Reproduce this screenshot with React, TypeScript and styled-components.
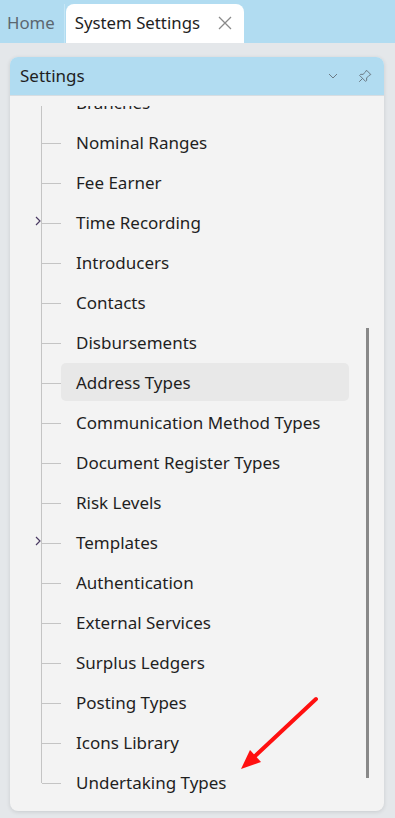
import React, { useLayoutEffect, useRef } from "react";
import styled, { createGlobalStyle } from "styled-components";

const Global = createGlobalStyle`
  html, body { margin: 0; padding: 0; }
  body {
    width: 395px; height: 818px; overflow: hidden;
    background: #e4e7ea;
    font-family: "Noto Sans", "Open Sans", sans-serif;
    color: #1c1c1c;
  }
`;

const Page = styled.div`
  position: relative;
  width: 395px;
  height: 818px;
  display: flex;
  flex-direction: column;
`;

const TabBar = styled.div`
  flex: none;
  height: 43px;
  background: #b1dcf1;
  display: flex;
  align-items: flex-end;
  padding-left: 7px;
  box-sizing: border-box;
`;

const HomeTab = styled.div`
  height: 39px;
  display: flex;
  align-items: center;
  padding-right: 9px;
  font-size: 16.8px;
  color: #5b6770;
  border-right: 1px solid #c6e6f5;
  margin-right: 1px;
  box-sizing: border-box;
  padding-bottom: 2px;
`;

const ActiveTab = styled.div`
  height: 39px;
  width: 178px;
  background: #ffffff;
  border-radius: 8px 8px 0 0;
  display: flex;
  align-items: center;
  padding: 0 0 2px 9px;
  box-sizing: border-box;
  font-size: 16.8px;
  color: #1f1f1f;
  gap: 17px;
`;

const CloseBtn = styled.span`
  display: inline-flex;
  width: 16px;
  height: 16px;
  align-items: center;
  justify-content: center;
`;

const Content = styled.div`
  flex: 1;
  min-height: 0;
  padding: 14px 11px 7px 10px;
  display: flex;
`;

const Panel = styled.div`
  flex: 1;
  min-height: 0;
  position: relative;
  background: #f3f3f3;
  border-radius: 8px;
  box-shadow: 0 1px 4px rgba(0, 0, 0, 0.12);
  display: flex;
  flex-direction: column;
  overflow: hidden;
`;

const PanelHeader = styled.div`
  flex: none;
  height: 39px;
  background: #b1dcf1;
  border-bottom: 1px solid #d6dde2;
  display: flex;
  align-items: center;
  padding: 0 12px 0 10px;
  box-sizing: border-box;
  font-size: 17px;
  color: #1f1f1f;
`;

const HeaderTitle = styled.div`
  flex: 1;
  padding-bottom: 1px;
`;

const HeaderIcons = styled.div`
  display: flex;
  align-items: center;
  gap: 20px;
`;

const Body = styled.div`
  flex: 1;
  position: relative;
  padding: 10px 0 8px 0;
  display: flex;
  min-height: 0;
`;

const Scroller = styled.div`
  flex: 1;
  overflow-y: auto;
  scrollbar-width: none;
  &::-webkit-scrollbar { display: none; }
`;

const List = styled.ul`
  list-style: none;
  margin: 0;
  padding: 0 35px 0 31px;
`;

const Row = styled.li<{ $last?: boolean }>`
  position: relative;
  height: 40px;
  display: flex;
  align-items: center;
  &::before {
    content: "";
    position: absolute;
    left: 0;
    top: 0;
    width: 1px;
    height: ${(p) => (p.$last ? "20px" : "40px")};
    background: #c4c4c4;
  }
`;

const Connector = styled.span`
  width: 19px;
  height: 1px;
  background: #c4c4c4;
  margin-left: 1px;
  flex: none;
`;

const Expander = styled.span`
  position: absolute;
  left: -6px;
  top: 13px;
  display: flex;
`;

const Label = styled.span<{ $selected?: boolean }>`
  flex: 1;
  height: 38px;
  display: flex;
  align-items: center;
  padding-left: 15px;
  margin-top: -2px;
  border-radius: 5px;
  font-size: 17px;
  color: #1f1f1f;
  background: ${(p) => (p.$selected ? "#e8e8e8" : "transparent")};
  white-space: nowrap;
`;

const ScrollThumb = styled.div`
  position: absolute;
  right: 15px;
  top: 232px;
  width: 3px;
  height: 450px;
  background: #888888;
`;

const Arrow = styled.svg`
  position: absolute;
  left: 236px;
  top: 693px;
  pointer-events: none;
`;

const items: { name: string; expand?: boolean; selected?: boolean }[] = [
  { name: "Branches" },
  { name: "Nominal Ranges" },
  { name: "Fee Earner" },
  { name: "Time Recording", expand: true },
  { name: "Introducers" },
  { name: "Contacts" },
  { name: "Disbursements" },
  { name: "Address Types", selected: true },
  { name: "Communication Method Types" },
  { name: "Document Register Types" },
  { name: "Risk Levels" },
  { name: "Templates", expand: true },
  { name: "Authentication" },
  { name: "External Services" },
  { name: "Surplus Ledgers" },
  { name: "Posting Types" },
  { name: "Icons Library" },
  { name: "Undertaking Types" },
];

export default function App() {
  const ref = useRef<HTMLDivElement>(null);
  useLayoutEffect(() => {
    if (ref.current) ref.current.scrollTop = ref.current.scrollHeight;
  }, []);
  return (
    <Page>
      <Global />
      <TabBar>
        <HomeTab>Home</HomeTab>
        <ActiveTab>
          System Settings
          <CloseBtn>
            <svg width="16" height="16" viewBox="0 0 16 16">
              <path d="M2 2 L14 14 M14 2 L2 14" stroke="#8a8a8a" strokeWidth="1.3" />
            </svg>
          </CloseBtn>
        </ActiveTab>
      </TabBar>
      <Content>
        <Panel>
          <PanelHeader>
            <HeaderTitle>Settings</HeaderTitle>
            <HeaderIcons>
              <svg width="10" height="6" viewBox="0 0 10 6">
                <path d="M1 1 L5 5 L9 1" stroke="#6b7a85" strokeWidth="1" fill="none" />
              </svg>
              <svg width="14" height="14" viewBox="0 0 14 14">
                <path
                  d="M8.5 1.2 L12.8 5.5 L10.9 6.6 L8.6 9 L8.7 11.3 L7.6 12.4 L1.6 6.4 L2.7 5.3 L5 5.4 L7.4 3.1 Z M4.6 9.4 L1.2 12.8"
                  stroke="#6b7a85"
                  strokeWidth="1"
                  fill="none"
                  strokeLinejoin="round"
                />
              </svg>
            </HeaderIcons>
          </PanelHeader>
          <Body>
            <Scroller ref={ref}>
              <List>
                {items.map((it, i) => (
                  <Row key={it.name} $last={i === items.length - 1}>
                    {it.expand && (
                      <Expander>
                        <svg width="6" height="10" viewBox="0 0 6 10">
                          <path d="M1 1 L5 5 L1 9" stroke="#4b3b63" strokeWidth="1.2" fill="none" />
                        </svg>
                      </Expander>
                    )}
                    <Connector />
                    <Label $selected={it.selected}>{it.name}</Label>
                  </Row>
                ))}
              </List>
            </Scroller>
            <ScrollThumb />
          </Body>
        </Panel>
      </Content>
      <Arrow width="90" height="85" viewBox="0 0 90 85">
        <path d="M80 6 L18 64" stroke="#ff1010" strokeWidth="4" strokeLinecap="round" />
        <path d="M5 76 L14 57 L25 69 Z" fill="#ff1010" />
      </Arrow>
    </Page>
  );
}
